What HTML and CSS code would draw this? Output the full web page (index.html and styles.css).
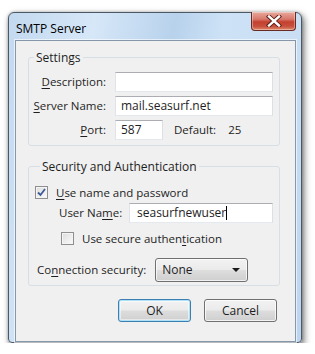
FILE: index.html
```html
<!DOCTYPE html>
<html lang="en">
<head>
<meta charset="UTF-8" />
<title>SMTP Server</title>
<link rel="stylesheet" href="styles.css">
</head>
<body>
<div class="window">
  <div class="titlebar">
    <span class="title">SMTP Server</span>
    <div class="close">
      <svg width="16" height="12" viewBox="0 0 16 12">
        <path d="M3 1.5 L13 10.5 M13 1.5 L3 10.5" stroke="#5a1a14" stroke-width="4.2" stroke-linecap="square"/>
        <path d="M3 1.5 L13 10.5 M13 1.5 L3 10.5" stroke="#ffffff" stroke-width="2.4" stroke-linecap="square"/>
      </svg>
    </div>
  </div>

  <div class="client">
    <fieldset class="group settings">
      <legend>Settings</legend>
      <div class="form-grid">
        <span class="lbl"><u>D</u>escription:</span>
        <div class="field wide"></div>

        <span class="lbl"><u>S</u>erver Name:</span>
        <div class="field wide">mail.seasurf.net</div>

        <span class="lbl"><u>P</u>ort:</span>
        <div class="port-row">
          <div class="field port">587</div>
          <span class="default-lbl">Default:</span>
          <span class="default-val">25</span>
        </div>
      </div>
    </fieldset>

    <fieldset class="group security">
      <legend>Security and Authentication</legend>
      <div class="check-row">
        <span class="checkbox checked">
          <svg width="9" height="9" viewBox="0 0 9 9"><path d="M1 4.5 L3.5 7 L8 1" fill="none" stroke="#3d5a98" stroke-width="1.8"/></svg>
        </span>
        <span><u>U</u>se name and password</span>
      </div>
      <div class="user-row">
        <span class="lbl">User Na<u>m</u>e:</span>
        <div class="field user">seasurfnewuser<span class="caret"></span></div>
      </div>
      <div class="check-row sub">
        <span class="checkbox"></span>
        <span>Use secure authen<u>t</u>ication</span>
      </div>
      <div class="conn-row">
        <span>Co<u>n</u>nection security:</span>
        <div class="dropdown">
          <span>None</span>
          <span class="arrow"></span>
        </div>
      </div>
    </fieldset>

    <div class="actions">
      <div class="btn default">OK</div>
      <div class="btn">Cancel</div>
    </div>
  </div>
</div>
</body>
</html>
```

FILE: styles.css
```css
body {
  margin: 0;
  background: #ffffff;
  font-family: "Open Sans", "Noto Sans", sans-serif;
  font-size: 11.5px;
  color: #1e1e1e;
}
u {
  text-decoration: underline;
  text-underline-offset: 2px;
}
.window {
  margin: 12px 0 0 8px;
  width: 292px;
  height: 329px;
  border: 1px solid #4b5866;
  border-radius: 6px 6px 4px 4px;
  background: linear-gradient(100deg, #c3d9ef 0%, #d6e7f8 25%, #b8d2ec 48%, #cde2f6 62%, #c9def3 85%, #bcd5ee 100%);
  box-shadow: 2px 3px 7px rgba(0,0,0,0.55), 0 0 3px rgba(0,0,0,0.25);
  display: flex;
  flex-direction: column;
}
.titlebar {
  height: 27px;
  display: flex;
  justify-content: space-between;
  align-items: flex-start;
  padding: 0 5px 0 7px;
}
.title {
  margin-top: 7px;
  font-size: 12px;
  color: #000;
}
.close {
  margin-top: -1px;
  width: 45px;
  height: 19px;
  border: 1px solid #6a2a24;
  border-top: none;
  border-radius: 0 0 4px 4px;
  box-sizing: border-box;
  background: linear-gradient(#e9a99c 0%, #d7786b 40%, #c4402f 55%, #c8503e 80%, #dd8a6a 100%);
  box-shadow: inset 0 0 0 1px rgba(255,255,255,0.35);
  display: flex;
  align-items: center;
  justify-content: center;
}
.client {
  margin: 0 5px 0 6px;
  height: 292px;
  border: 1px solid #8797aa;
  box-shadow: 0 0 0 1px rgba(255,255,255,0.6);
  background: #f0f0f0;
  padding: 9px 15px 0 12px;
  display: flex;
  flex-direction: column;
}
.group {
  margin: 0;
  padding: 0;
  border: 1px solid #d5dfe5;
  border-radius: 3px;
  min-width: 0;
}
.group legend {
  margin-left: 5px;
  padding: 0 2px;
  line-height: 16px;
  font-size: 12px;
  white-space: nowrap;
}
.settings {
  padding: 6px 6px 5px 0;
}
.form-grid {
  display: grid;
  grid-template-columns: 77px 1fr;
  column-gap: 9px;
  row-gap: 4px;
  align-items: center;
}
.lbl {
  text-align: right;
  white-space: nowrap;
}
.field {
  height: 20px;
  box-sizing: border-box;
  border: 1px solid #abadb3;
  border-left-color: #e2e3ea;
  border-right-color: #dbdfe6;
  border-bottom-color: #e3e9ef;
  background: #fff;
  padding: 0 5px;
  line-height: 18px;
  font-size: 12px;
  white-space: nowrap;
}
.port-row {
  display: flex;
  align-items: center;
}
.field.port {
  width: 48px;
}
.default-lbl {
  margin-left: 11px;
}
.default-val {
  margin-left: 12px;
}
.security {
  margin-top: 13px;
  padding: 9px 6px 3px 6px;
}
.check-row {
  display: flex;
  align-items: center;
  gap: 8px;
  height: 18px;
  white-space: nowrap;
}
.check-row.sub {
  margin-top: 7px;
  margin-left: 26px;
}
.checkbox {
  width: 13px;
  height: 13px;
  box-sizing: border-box;
  border: 1px solid #8f8f8f;
  background: linear-gradient(135deg, #dcdcdc, #fbfbfb);
  box-shadow: inset 0 0 0 1px #f4f4f4;
  display: flex;
  align-items: center;
  justify-content: center;
}
.user-row {
  display: flex;
  align-items: center;
  margin-top: 1px;
  margin-left: 24px;
}
.user-row .lbl {
  width: 62px;
  text-align: left;
}
.field.user {
  width: 145px;
  height: 20px;
  margin-left: 8px;
  padding-left: 7px;
}
.caret {
  display: inline-block;
  width: 1px;
  height: 14px;
  background: #000;
  vertical-align: -3px;
}
.conn-row {
  display: flex;
  align-items: center;
  margin-top: 10px;
  margin-left: 2px;
  gap: 9px;
  white-space: nowrap;
}
.dropdown {
  width: 93px;
  height: 24px;
  box-sizing: border-box;
  border: 1px solid #707070;
  border-radius: 3px;
  background: linear-gradient(#f2f2f2 0%, #ebebeb 48%, #dddddd 52%, #cfcfcf 100%);
  box-shadow: inset 0 0 0 1px rgba(255,255,255,0.7);
  display: flex;
  align-items: center;
  justify-content: space-between;
  padding: 0 7px 0 6px;
  font-size: 12px;
}
.arrow {
  width: 0;
  height: 0;
  border-left: 4px solid transparent;
  border-right: 4px solid transparent;
  border-top: 4px solid #1a1a1a;
}
.actions {
  margin-top: 13px;
  display: flex;
  justify-content: flex-end;
  gap: 13px;
  padding-right: 3px;
}
.btn {
  width: 73px;
  height: 23px;
  box-sizing: border-box;
  border: 1px solid #707070;
  border-radius: 3px;
  background: linear-gradient(#f2f2f2 0%, #ebebeb 48%, #dddddd 52%, #cfcfcf 100%);
  box-shadow: inset 0 0 0 1px rgba(255,255,255,0.75);
  display: flex;
  align-items: center;
  justify-content: center;
  font-size: 12px;
}
.btn.default {
  border-color: #3c7fb1;
  box-shadow: inset 0 0 0 1px #aee0f8, inset 0 0 0 2px rgba(255,255,255,0.5);
}
```
